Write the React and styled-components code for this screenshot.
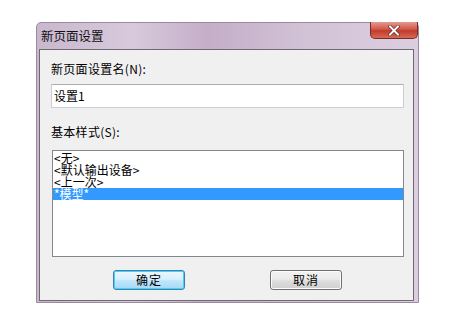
import styled, { createGlobalStyle } from "styled-components"

const Global = createGlobalStyle`
    html, body {
        margin: 0;
        background: #ffffff;
        font-family: "Noto Sans CJK SC", "Liberation Sans", sans-serif;
        font-size: 12px;
        color: #000000;
    }
`

const Page = styled.div`
    padding: 22px 0 0 36px;
`

const Window = styled.div`
    width: 383px;
    height: 281px;
    box-sizing: border-box;
    display: flex;
    flex-direction: column;
    padding: 0 4px 3px 2px;
    border: 1px solid #9a8aa0;
    border-radius: 5px 5px 0 0;
    background: linear-gradient(90deg, #c9b7cd 0%, #d8cadc 25%, #c4aec8 45%, #d2c2d6 70%, #dccee0 100%);
`

const TitleBar = styled.div`
    height: 26px;
    display: flex;
    align-items: flex-start;
    justify-content: space-between;
`

const Title = styled.span`
    font-size: 12.5px;
    line-height: 26px;
    padding-left: 2px;
    color: #111111;
`

const CloseButton = styled.div`
    width: 48px;
    height: 17px;
    margin: -1px -4px 0 0;
    box-sizing: border-box;
    border: 1px solid #7a2b24;
    border-top: none;
    border-radius: 0 0 5px 5px;
    background: linear-gradient(180deg, #e29c90 0%, #d2584a 45%, #c23a2c 55%, #d46a58 100%);
    display: flex;
    align-items: center;
    justify-content: center;
`

const Client = styled.div`
    flex: 1;
    display: flex;
    flex-direction: column;
    background: #f0f0f0;
    border: 1px solid #6e6a70;
    padding: 11px 9px 10px 11px;
`

const Label = styled.div`
    line-height: 16px;
    letter-spacing: 0.3px;
    margin-top: ${p => p.$gap || 0}px;
`

const TextBox = styled.div`
    height: 24px;
    margin-top: 7px;
    box-sizing: border-box;
    border: 1px solid #c9ced6;
    border-top-color: #abadb3;
    background: #ffffff;
    padding-left: 2px;
    line-height: 22px;
`

const ListBox = styled.div`
    height: 107px;
    margin-top: 10px;
    margin-left: 1px;
    box-sizing: border-box;
    border: 1px solid #828790;
    background: #ffffff;
    padding-top: 1px;
`

const ListItem = styled.div`
    height: 12px;
    line-height: 12px;
    padding-left: 1px;
    white-space: nowrap;
    background: ${p => p.$selected ? "#3399ff" : "transparent"};
    color: ${p => p.$selected ? "#ffffff" : "#000000"};
`

const ButtonRow = styled.div`
    display: flex;
    justify-content: center;
    gap: 85px;
    margin-top: 13px;
`

const Button = styled.div`
    width: 72px;
    height: 20px;
    box-sizing: border-box;
    border: 1px solid ${p => p.$default ? "#3c7fb1" : "#707070"};
    border-radius: 3px;
    background: ${p => p.$default
        ? "linear-gradient(180deg, #eaf6fd 0%, #d9f0fc 45%, #bee6fd 55%, #a7d9f5 100%)"
        : "linear-gradient(180deg, #f2f2f2 0%, #ebebeb 45%, #dddddd 55%, #cfcfcf 100%)"};
    box-shadow: ${p => p.$default ? "inset 0 0 0 1px #48d0f7" : "inset 0 0 0 1px #fcfcfc"};
    display: flex;
    align-items: center;
    justify-content: center;
    line-height: 18px;
    letter-spacing: 1px;
`

const items = ["<无>", "<默认输出设备>", "<上一次>", "*模型*"]

const App = () => {
    return (
        <Page>
            <Global />
            <Window>
                <TitleBar>
                    <Title>新页面设置</Title>
                    <CloseButton>
                        <svg width="12" height="11" viewBox="0 0 12 11">
                            <path d="M2 1.5 L10 9.5 M10 1.5 L2 9.5" stroke="#5a1a14" strokeWidth="3.2" strokeLinecap="square" />
                            <path d="M2 1.5 L10 9.5 M10 1.5 L2 9.5" stroke="#ffffff" strokeWidth="2" strokeLinecap="square" />
                        </svg>
                    </CloseButton>
                </TitleBar>
                <Client>
                    <Label>新页面设置名(N):</Label>
                    <TextBox>设置1</TextBox>
                    <Label $gap={16}>基本样式(S):</Label>
                    <ListBox>
                        {items.map((item, i) => (
                            <ListItem key={item} $selected={i === 3}>{item}</ListItem>
                        ))}
                    </ListBox>
                    <ButtonRow>
                        <Button $default>确定</Button>
                        <Button>取消</Button>
                    </ButtonRow>
                </Client>
            </Window>
        </Page>
    )
}

export default App;
